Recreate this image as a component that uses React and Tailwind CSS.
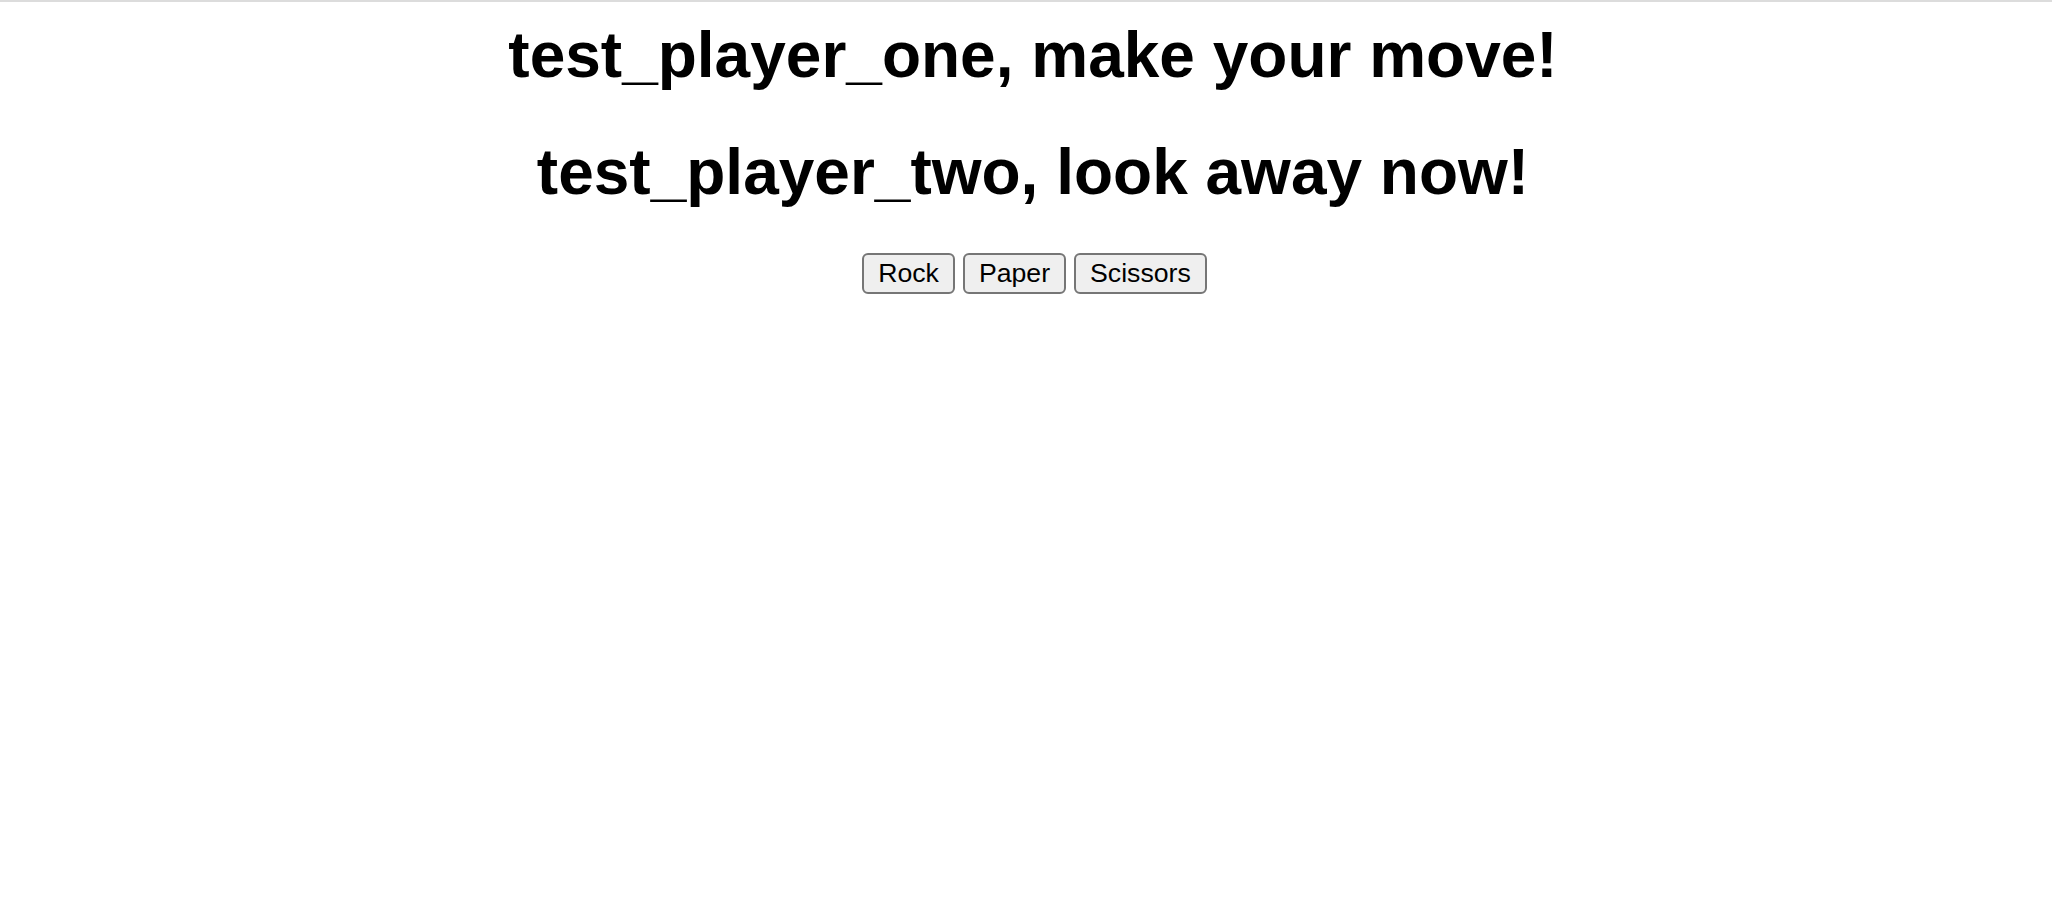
import React from 'react';

const moves = ['Rock', 'Paper', 'Scissors'];

const App = () => {
  return (
    <div className="min-h-screen bg-white border-t-2 border-[#dcdcdc] font-['Liberation_Sans',Arial,sans-serif] text-black">
      <div className="flex flex-col items-center pl-[14px]">
        <h1 className="mt-[17px] text-[64px] font-bold leading-[73.6px]">test_player_one, make your move!</h1>
        <h1 className="mt-[43px] text-[64px] font-bold leading-[73.6px]">test_player_two, look away now!</h1>
        <div className="mt-[44px] ml-[3px] flex gap-[8px]">
          {moves.map((move) => (
            <button
              key={move}
              className="h-[41px] px-[14px] flex items-center text-[26.67px] leading-none bg-[#efefef] border-2 border-[#767676] rounded-[6px]"
            >
              {move}
            </button>
          ))}
        </div>
      </div>
    </div>
  );
};

export default App;
